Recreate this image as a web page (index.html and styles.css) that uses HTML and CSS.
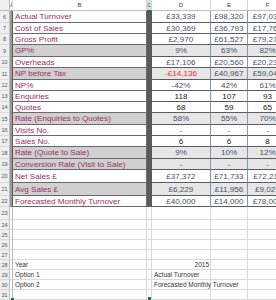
FILE: index.html
```html
<!DOCTYPE html>
<html>
<head>
<meta charset="utf-8">
<link rel="stylesheet" href="styles.css">
</head>
<body>
<div class="sheet">
  <div class="row hdr">
    <div class="rh corner"></div>
    <div class="ch cha">A</div>
    <div class="ch">B</div>
    <div class="ch chc">C</div>
    <div class="ch">D</div>
    <div class="ch">E</div>
    <div class="ch">F</div>
  </div>

  <div class="row h12"><div class="rh">6</div><div class="a"></div><div class="b">Actual Turnover</div><div class="c"></div><div class="v">£33,339</div><div class="v">£98,320</div><div class="v">£97,037</div></div>
  <div class="row h11"><div class="rh">7</div><div class="a"></div><div class="b">Cost of Sales</div><div class="c"></div><div class="v">£30,369</div><div class="v">£36,793</div><div class="v">£17,765</div></div>
  <div class="row h11"><div class="rh">8</div><div class="a"></div><div class="b">Gross Profit</div><div class="c"></div><div class="v">£2,970</div><div class="v">£61,527</div><div class="v">£79,272</div></div>
  <div class="row h12 grey"><div class="rh">9</div><div class="a"></div><div class="b">GP%</div><div class="c"></div><div class="v">9%</div><div class="v">63%</div><div class="v">82%</div></div>
  <div class="row h11"><div class="rh">10</div><div class="a"></div><div class="b">Overheads</div><div class="c"></div><div class="v">£17,106</div><div class="v">£20,560</div><div class="v">£20,231</div></div>
  <div class="row h12 grey"><div class="rh">11</div><div class="a"></div><div class="b">NP before Tax</div><div class="c"></div><div class="v neg">-£14,136</div><div class="v">£40,967</div><div class="v">£59,041</div></div>
  <div class="row h11"><div class="rh">12</div><div class="a"></div><div class="b">NP%</div><div class="c"></div><div class="v">-42%</div><div class="v">42%</div><div class="v">61%</div></div>
  <div class="row h11"><div class="rh">13</div><div class="a"></div><div class="b">Enquiries</div><div class="c"></div><div class="v dk">118</div><div class="v dk">107</div><div class="v dk">93</div></div>
  <div class="row h11"><div class="rh">14</div><div class="a"></div><div class="b">Quotes</div><div class="c"></div><div class="v dk">68</div><div class="v dk">59</div><div class="v dk">65</div></div>
  <div class="row h12 grey"><div class="rh">15</div><div class="a"></div><div class="b">Rate (Enquiries to Quotes)</div><div class="c"></div><div class="v">58%</div><div class="v">55%</div><div class="v">70%</div></div>
  <div class="row h11"><div class="rh">16</div><div class="a"></div><div class="b">Visits No.</div><div class="c"></div><div class="v">-</div><div class="v">-</div><div class="v">-</div></div>
  <div class="row h11"><div class="rh">17</div><div class="a"></div><div class="b">Sales No.</div><div class="c"></div><div class="v dk">6</div><div class="v dk">6</div><div class="v dk">8</div></div>
  <div class="row h12 grey"><div class="rh">18</div><div class="a"></div><div class="b">Rate (Quote to Sale)</div><div class="c"></div><div class="v">9%</div><div class="v">10%</div><div class="v">12%</div></div>
  <div class="row h11 grey"><div class="rh">19</div><div class="a"></div><div class="b">Conversion Rate (Visit to Sale)</div><div class="c"></div><div class="v">-</div><div class="v">-</div><div class="v">-</div></div>
  <div class="row h13"><div class="rh">20</div><div class="a"></div><div class="b">Net Sales £</div><div class="c"></div><div class="v">£37,372</div><div class="v">£71,733</div><div class="v">£72,211</div></div>
  <div class="row h13 grey"><div class="rh">21</div><div class="a"></div><div class="b">Avg Sales £</div><div class="c"></div><div class="v">£6,229</div><div class="v">£11,956</div><div class="v">£9,027</div></div>
  <div class="row h11"><div class="rh">22</div><div class="a"></div><div class="b">Forecasted Monthly Turnover</div><div class="c"></div><div class="v">£40,000</div><div class="v">£14,000</div><div class="v">£78,000</div></div>

  <div class="row h13 lo"><div class="rh">23</div><div class="g"></div><div class="g"></div><div class="g"></div><div class="g"></div><div class="g"></div><div class="g"></div></div>
  <div class="row h10 lo"><div class="rh">24</div><div class="g"></div><div class="g"></div><div class="g"></div><div class="g"></div><div class="g"></div><div class="g"></div></div>
  <div class="row h10 lo"><div class="rh">25</div><div class="g"></div><div class="g"></div><div class="g"></div><div class="g"></div><div class="g"></div><div class="g"></div></div>
  <div class="row h10 lo"><div class="rh">26</div><div class="g"></div><div class="g"></div><div class="g"></div><div class="g"></div><div class="g"></div><div class="g"></div></div>
  <div class="row h10 lo"><div class="rh">27</div><div class="g"></div><div class="g"></div><div class="g"></div><div class="g"></div><div class="g"></div><div class="g"></div></div>
  <div class="row h10 lo"><div class="rh">28</div><div class="g"></div><div class="g t">Year</div><div class="g"></div><div class="g t r">2015</div><div class="g"></div><div class="g"></div></div>
  <div class="row h10 lo"><div class="rh">29</div><div class="g"></div><div class="g t">Option 1</div><div class="g"></div><div class="g t ov">Actual Turnover</div><div class="g"></div><div class="g"></div></div>
  <div class="row h10 lo"><div class="rh">30</div><div class="g"></div><div class="g t">Option 2</div><div class="g"></div><div class="g t ov">Forecasted Monthly Turnover</div><div class="g"></div><div class="g"></div></div>
  <div class="row h10 lo"><div class="rh">31</div><div class="g"></div><div class="g"></div><div class="g"></div><div class="g"></div><div class="g"></div><div class="g"></div></div>

  <span class="mark m1"></span>
  <span class="mark m2"></span>
</div>
</body>
</html>
```

FILE: styles.css
```css
html, body {
  margin: 0;
  padding: 0;
  background: #ffffff;
  overflow: hidden;
}
.sheet {
  position: relative;
  width: 276px;
  height: 300px;
  overflow: hidden;
  font-family: "Liberation Sans", Arial, sans-serif;
}
.row {
  display: grid;
  grid-template-columns: 10px 3px 134px 5px 59px 37px 40px;
  width: 288px;
}
.row > div {
  box-sizing: border-box;
  overflow: hidden;
  white-space: nowrap;
  display: flex;
  align-items: center;
}
.hdr { height: 11px; }
.h10 { height: 10px; }
.h11 { height: 11px; }
.h12 { height: 12px; }
.h13 { height: 13px; }

.rh {
  background: #efefef;
  border-right: 1px solid #bcbcbc;
  border-bottom: 1px solid #dadada;
  color: #555555;
  font-size: 5.5px;
  justify-content: center;
}
.ch {
  background: #ffffff;
  border-right: 1px solid #d6d6d6;
  border-bottom: 1px solid #bdbdbd;
  color: #444444;
  font-size: 6px;
  justify-content: center;
}
.cha { justify-content: flex-start; }
.chc {
  background: #d3e6d5;
  color: #217346;
  border-bottom: 1px solid #217346;
  font-size: 5px;
}
.corner { background: #efefef; border-bottom: 1px solid #bdbdbd; }

.a {
  background: #9a9a9a;
  border-right: 1px solid #5a5a5a;
  border-bottom: 1px solid #8a8a8a;
}
.b {
  background: #ffffff;
  border-right: 1px solid #6a6a6a;
  border-bottom: 1px solid #6a6a6a;
  color: #9c2f61;
  font-size: 8.1px;
  padding-left: 2px;
}
.c {
  background: #5a5a5a;
}
.v {
  background: #ffffff;
  border-right: 1px solid #8497b0;
  border-bottom: 1px solid #5c5c5c;
  color: #44546a;
  font-size: 8.1px;
  justify-content: center;
}
.grey .b { background: #d0d0d0; }
.grey .v { background: #e6e6e6; }
.v.neg { color: #ff2b2b; }
.v.dk { color: #222222; }

.g {
  border-right: 1px solid #dadada;
  border-bottom: 1px solid #dadada;
  color: #333333;
  font-size: 6.5px;
}
.lo .g:nth-child(2) { border-right: 1px solid #b8b8b8; }
.g.t { padding-left: 2px; }
.g.r { justify-content: flex-end; padding-right: 1px; }
.g.ov { overflow: visible; }
.lo .g:nth-child(5) { overflow: visible; }

.mark {
  position: absolute;
  width: 3px;
  height: 3px;
  background: #217346;
}
.m1 { left: 11px; top: 298px; }
.m2 { left: 148px; top: 297px; }
```
